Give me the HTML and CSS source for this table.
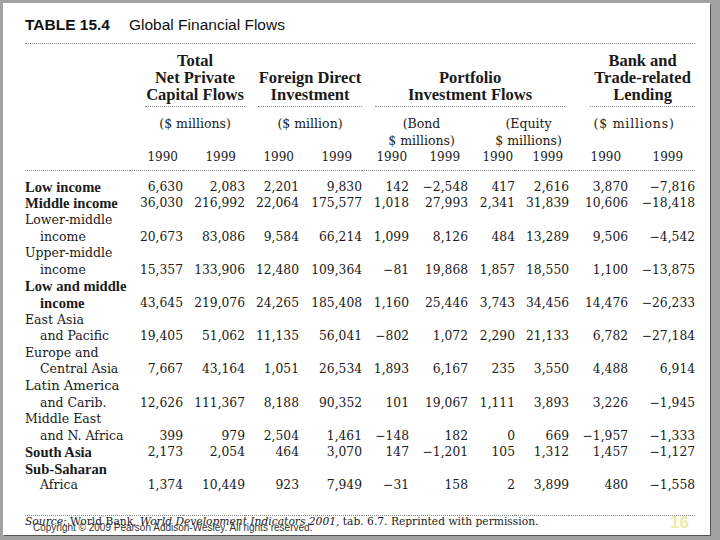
FILE: index.html
```html
<!DOCTYPE html>
<html lang="en">
<head>
<meta charset="utf-8">
<title>Table 15.4 Global Financial Flows</title>
<link rel="stylesheet" href="styles.css">
</head>
<body>
<div class="slide">
  <div class="title"><span class="tnum">TABLE 15.4</span><span class="tname">Global Financial Flows</span></div>
  <table class="flows">
    <colgroup>
      <col class="c-stub"><col class="c1"><col class="c2"><col class="c3"><col class="c4"><col class="c5"><col class="c6"><col class="c7"><col class="c8"><col class="c9"><col class="c10">
    </colgroup>
    <thead>
      <tr class="groups">
        <th></th>
        <th colspan="2" class="g1"><div>Total<br>Net Private<br>Capital Flows</div></th>
        <th colspan="2" class="g2"><div>Foreign Direct<br>Investment</div></th>
        <th colspan="4" class="g3"><div>Portfolio<br>Investment Flows</div></th>
        <th colspan="2" class="g4"><div>Bank and<br>Trade-related<br>Lending</div></th>
      </tr>
      <tr class="units">
        <td></td>
        <td colspan="2" class="u1">($ millions)</td>
        <td colspan="2" class="u2">($ million)</td>
        <td colspan="2" class="u3">(Bond<br>$ millions)</td>
        <td colspan="2" class="u4">(Equity<br>$ millions)</td>
        <td colspan="2" class="u5">($ millions)</td>
      </tr>
      <tr class="years">
        <td></td>
        <td>1990</td><td>1999</td><td>1990</td><td>1999</td><td>1990</td><td>1999</td><td>1990</td><td>1999</td><td>1990</td><td>1999</td>
      </tr>
    </thead>
    <tbody>
      <tr><th><span class="ln b">Low income</span></th><td>6,630</td><td>2,083</td><td>2,201</td><td>9,830</td><td>142</td><td>−2,548</td><td>417</td><td>2,616</td><td>3,870</td><td>−7,816</td></tr>
      <tr><th><span class="ln b">Middle income</span></th><td>36,030</td><td>216,992</td><td>22,064</td><td>175,577</td><td>1,018</td><td>27,993</td><td>2,341</td><td>31,839</td><td>10,606</td><td>−18,418</td></tr>
      <tr><th><span class="ln">Lower-middle</span><span class="ln ind">income</span></th><td>20,673</td><td>83,086</td><td>9,584</td><td>66,214</td><td>1,099</td><td>8,126</td><td>484</td><td>13,289</td><td>9,506</td><td>−4,542</td></tr>
      <tr><th><span class="ln">Upper-middle</span><span class="ln ind">income</span></th><td>15,357</td><td>133,906</td><td>12,480</td><td>109,364</td><td>−81</td><td>19,868</td><td>1,857</td><td>18,550</td><td>1,100</td><td>−13,875</td></tr>
      <tr><th><span class="ln b">Low and middle</span><span class="ln ind b">income</span></th><td>43,645</td><td>219,076</td><td>24,265</td><td>185,408</td><td>1,160</td><td>25,446</td><td>3,743</td><td>34,456</td><td>14,476</td><td>−26,233</td></tr>
      <tr><th><span class="ln">East Asia</span><span class="ln ind">and Pacific</span></th><td>19,405</td><td>51,062</td><td>11,135</td><td>56,041</td><td>−802</td><td>1,072</td><td>2,290</td><td>21,133</td><td>6,782</td><td>−27,184</td></tr>
      <tr><th><span class="ln">Europe and</span><span class="ln ind">Central Asia</span></th><td>7,667</td><td>43,164</td><td>1,051</td><td>26,534</td><td>1,893</td><td>6,167</td><td>235</td><td>3,550</td><td>4,488</td><td>6,914</td></tr>
      <tr><th><span class="ln big">Latin America</span><span class="ln ind">and Carib.</span></th><td>12,626</td><td>111,367</td><td>8,188</td><td>90,352</td><td>101</td><td>19,067</td><td>1,111</td><td>3,893</td><td>3,226</td><td>−1,945</td></tr>
      <tr><th><span class="ln">Middle East</span><span class="ln ind">and N. Africa</span></th><td>399</td><td>979</td><td>2,504</td><td>1,461</td><td>−148</td><td>182</td><td>0</td><td>669</td><td>−1,957</td><td>−1,333</td></tr>
      <tr><th><span class="ln b">South Asia</span></th><td>2,173</td><td>2,054</td><td>464</td><td>3,070</td><td>147</td><td>−1,201</td><td>105</td><td>1,312</td><td>1,457</td><td>−1,127</td></tr>
      <tr><th><span class="ln b">Sub-Saharan</span><span class="ln ind">Africa</span></th><td>1,374</td><td>10,449</td><td>923</td><td>7,949</td><td>−31</td><td>158</td><td>2</td><td>3,899</td><td>480</td><td>−1,558</td></tr>
    </tbody>
  </table>
  <p class="source"><i>Source:</i> World Bank, <i>World Development Indicators 2001,</i> tab. 6.7. Reprinted with permission.</p>
  <div class="copyright">Copyright © 2009 Pearson Addison-Wesley. All rights reserved.</div>
  <div class="pagenum">16</div>
</div>
</body>
</html>
```

FILE: styles.css
```css
html, body {
  margin: 0;
  padding: 0;
}
body {
  width: 720px;
  height: 540px;
  overflow: hidden;
  background: #a2a2a2;
}
.slide {
  position: relative;
  box-sizing: border-box;
  margin: 3px 0 0 3px;
  width: 707px;
  height: 532px;
  padding: 11.6px 0 0 22px;
  background: #fff;
  box-shadow: 1px 1px 0 #555;
}
.title {
  width: 670px;
  font-family: "Liberation Sans", Arial, sans-serif;
  font-size: 15.5px;
  line-height: 20px;
  color: #111;
  padding-bottom: 8px;
  border-bottom: 1px dotted #8a8a8a;
}
.tnum {
  font-weight: bold;
}
.tname {
  margin-left: 19px;
}
.flows {
  width: 670px;
  table-layout: fixed;
  border-collapse: collapse;
  border-spacing: 0;
  font-family: "DejaVu Serif", serif;
  font-size: 12.3px;
  color: #1a1a1a;
}
.c-stub { width: 105px; }
.c1 { width: 53px; }
.c2 { width: 62px; }
.c3 { width: 54px; }
.c4 { width: 63px; }
.c5 { width: 47px; }
.c6 { width: 59px; }
.c7 { width: 47px; }
.c8 { width: 54px; }
.c9 { width: 59px; }
.c10 { width: 67px; }
.flows th, .flows td {
  padding: 0;
}
.groups th {
  vertical-align: bottom;
  padding-top: 8.5px;
  font-family: "Liberation Serif", serif;
  font-weight: bold;
  font-size: 16.5px;
  line-height: 17px;
  text-align: center;
  white-space: nowrap;
}
.groups th div {
  padding-bottom: 3px;
  border-bottom: 1px dotted #8a8a8a;
}
.g1 div { margin-left: 15px; }
.g2 div { margin-left: 13px; }
.g3 div { margin-left: 13px; margin-right: 4px; }
.g4 div { margin-left: 21px; }
.units td {
  vertical-align: top;
  padding-top: 8px;
  font-size: 12.5px;
  line-height: 17px;
  text-align: center;
  white-space: nowrap;
}
.u1 { padding-left: 15px !important; }
.u2 { padding-left: 13px !important; }
.u3 { padding-left: 13px !important; }
.u4 { padding-left: 20px !important; }
.u5 { padding-left: 4px !important; letter-spacing: 0.8px; }
.years td {
  font-size: 12px;
  line-height: 16px;
  text-align: right;
  padding: 0 6px 5px 0;
  border-bottom: 1px dotted #8a8a8a;
}
.years td:nth-child(2) { padding-right: 5px; }
.years td:nth-child(3) { padding-right: 9px; }
.years td:nth-child(4) { padding-right: 5px; }
.years td:nth-child(5) { padding-right: 10px; }
.years td:nth-child(6) { padding-right: 2px; }
.years td:nth-child(7) { padding-right: 8px; }
.years td:nth-child(8) { padding-right: 2px; }
.years td:nth-child(9) { padding-right: 6px; }
.years td:nth-child(10) { padding-right: 7px; }
.years td:nth-child(11) { padding-right: 12px; }
tbody th {
  text-align: left;
  font-weight: normal;
  vertical-align: bottom;
  white-space: nowrap;
  font-size: 12.5px;
  line-height: 16.6px;
}
tbody td {
  text-align: right;
  vertical-align: bottom;
  line-height: 16.6px;
  white-space: nowrap;
}
tbody tr:first-child th, tbody tr:first-child td {
  padding-top: 7.7px;
}
tbody tr:last-child th, tbody tr:last-child td {
  padding-bottom: 21px;
  border-bottom: 1px dotted #8a8a8a;
}
.ln {
  display: block;
  height: 16.6px;
}
.ind {
  padding-left: 15px;
}
.b {
  font-family: "Liberation Serif", serif;
  font-weight: bold;
  font-size: 14.6px;
}
.big {
  font-size: 13.2px;
}
.source {
  margin: 0;
  font-family: "DejaVu Serif", serif;
  font-size: 10.7px;
  line-height: 9px;
  padding-top: 1px;
  color: #1a1a1a;
}
.copyright {
  position: absolute;
  left: 30px;
  top: 518.5px;
  font-family: "Liberation Sans", Arial, sans-serif;
  font-size: 10px;
  line-height: 11px;
  color: #333;
  white-space: nowrap;
}
.pagenum {
  position: absolute;
  left: 667px;
  top: 510.5px;
  font-family: "Liberation Sans", Arial, sans-serif;
  font-weight: bold;
  font-size: 17px;
  line-height: 17px;
  color: #efeb9c;
}
```
